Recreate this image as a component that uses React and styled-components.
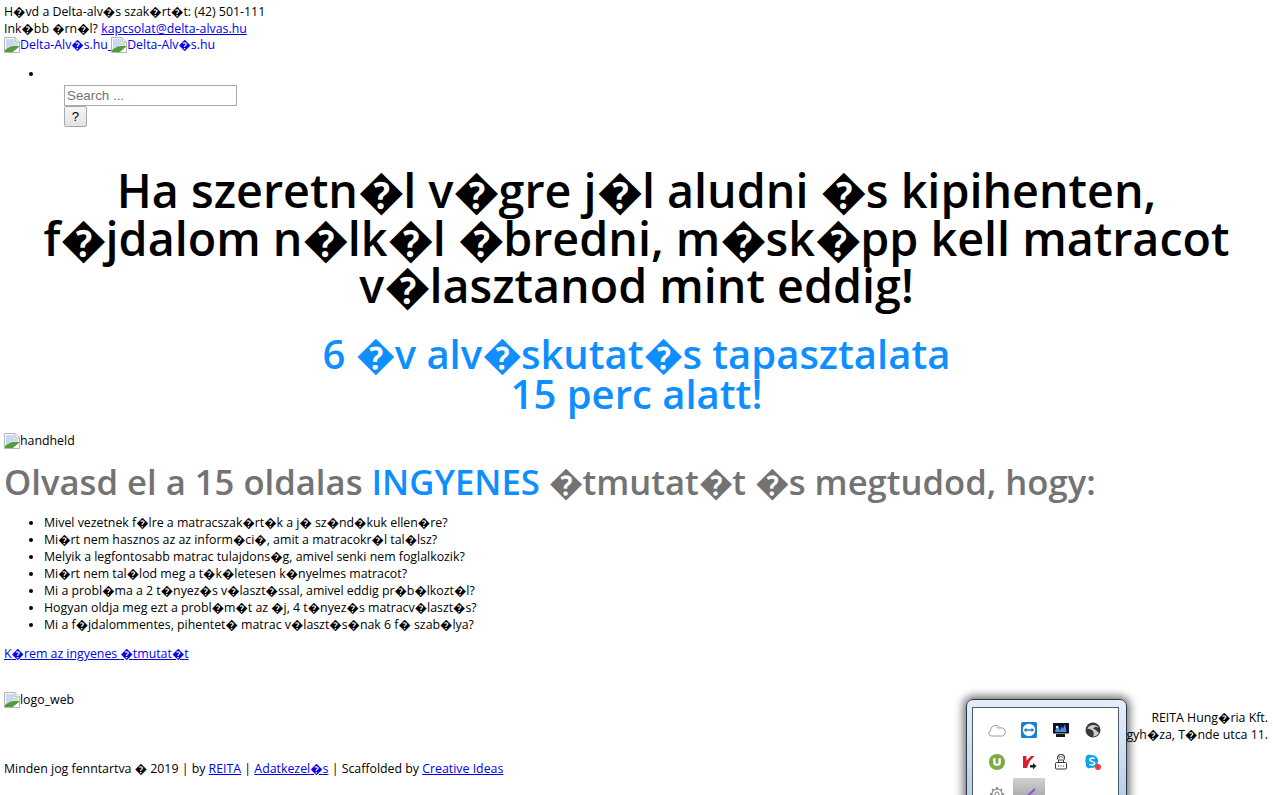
import React from "react";
import styled, { createGlobalStyle } from "styled-components";

const GlobalStyle = createGlobalStyle`
  html, body {
    margin: 0;
    padding: 0;
    background: #fff;
  }
  body {
    font-family: "Open Sans", sans-serif;
    font-size: 12.35px;
    line-height: 17px;
    color: #000;
    overflow: hidden;
  }
`;

const Page = styled.div`
  position: relative;
  height: 795px;
  padding: 3px 4px 0;
  box-sizing: border-box;
  overflow: hidden;
`;

const Line = styled.div``;

const Link = styled.a`
  color: #0000ee;
  text-decoration: underline;
`;

const AltText = styled.span`
  display: inline-block;
  text-decoration: none;
`;

const BrokenWrap = styled.span`
  display: inline-flex;
  align-items: center;
  vertical-align: bottom;
  height: 16px;
`;

const LogoLine = styled.div`
  height: 16px;
  line-height: 16px;
`;

const NavList = styled.ul`
  margin: 12px 0 0;
  padding: 0 0 0 40px;
  list-style: disc;
`;

const NavSpacer = styled.div`
  height: 20px;
`;

const SearchForm = styled.form`
  margin: 0 0 0 20px;
  display: flex;
  flex-direction: column;
  align-items: flex-start;
`;

const SearchInput = styled.input`
  width: 173px;
  height: 21px;
  box-sizing: border-box;
  border: 1px solid #a9a9a9;
  padding: 1px 2px;
  font-family: "Liberation Sans", Arial, sans-serif;
  font-size: 13.33px;
  &::placeholder {
    color: #757575;
  }
`;

const SearchButton = styled.button`
  width: 23px;
  height: 21px;
  padding: 0;
  border: 1px solid #a9a9a9;
  border-radius: 2px;
  background: linear-gradient(#f5f5f5, #e3e3e3);
  font-family: "Liberation Sans", Arial, sans-serif;
  font-size: 13.33px;
  color: #000;
`;

const Hero = styled.h1`
  margin: 40px 0 0;
  text-align: center;
  font-size: 46.67px;
  line-height: 47.5px;
  font-weight: 600;
`;

const SubHero = styled.h2`
  margin: 24px 0 0;
  text-align: center;
  font-size: 40px;
  line-height: 40px;
  font-weight: 600;
  color: #0f8fff;
`;

const HandheldLine = styled.div`
  margin-top: 19px;
  height: 16px;
  line-height: 16px;
`;

const GuideTitle = styled.h2`
  margin: 11px 0 0;
  font-size: 34.67px;
  line-height: 44px;
  font-weight: 600;
  color: #737373;
`;

const Accent = styled.span`
  color: #0f8fff;
`;

// the replacement glyph runs a bit narrower in the big headings
const BadChar = styled.span`
  letter-spacing: -0.03em;
`;

const PointList = styled.ul`
  margin: 10px 0 0;
  padding: 0 0 0 40px;
  list-style: disc;
`;

const Point = styled.li`
  line-height: 17px;
`;

const GuideLink = styled.div`
  margin-top: 12px;
`;

const LogoWeb = styled.div`
  margin-top: 30px;
  height: 16px;
  line-height: 16px;
`;

const FooterRow = styled.div`
  margin-top: 1px;
  text-align: right;
  padding-right: 1px;
`;

const Copyright = styled.div`
  margin-top: 17px;
`;

const TrayPopup = styled.div`
  position: absolute;
  left: 966px;
  top: 699px;
  width: 161px;
  height: 110px;
  box-sizing: border-box;
  padding: 7px 7px 0 5px;
  background: linear-gradient(#e4eefa 0%, #d2e2f3 40%, #b4cbe2 100%);
  border: 1px solid #2a3542;
  border-radius: 7px;
  box-shadow: 0 0 9px 3px rgba(0, 0, 0, 0.55);
`;

const TrayInner = styled.div`
  height: 100%;
  box-sizing: border-box;
  background: #fff;
  border: 1px solid #4d5b69;
  display: grid;
  grid-template-columns: repeat(4, 32px);
  grid-auto-rows: 32px;
  padding: 6px 0 0 8px;
`;

const TrayCell = styled.div`
  display: flex;
  align-items: center;
  justify-content: center;
  ${p => p.$active && "background: linear-gradient(#d2d2d2, #8f8f8f);"}
`;

function BrokenImage() {
  return (
    <svg width="16" height="16" viewBox="0 0 16 16">
      <path d="M0.5 0.5H11L15.5 5V15.5H0.5Z" fill="#fff" stroke="#b4b4b4" />
      <path d="M11 0.5V5H15.5" fill="#efefef" stroke="#b4b4b4" />
      <path d="M2 2H10V6H14V8C10 7.5 6 8.5 2 12Z" fill="#c9d8f2" />
      <path d="M1 15V13C5 9 10 8 15 9V10L9 15Z" fill="#4f9e3a" />
      <path d="M9 15L15 10V15Z" fill="#fff" />
    </svg>
  );
}

function Heading({ text }) {
  const parts = text.split("\uFFFD");
  return parts.map((part, i) => (
    <React.Fragment key={i}>
      {part}
      {i < parts.length - 1 && <BadChar>{"\uFFFD"}</BadChar>}
    </React.Fragment>
  ));
}

function TrayIcon({ kind }) {
  switch (kind) {
    case "cloud":
      return (
        <svg width="18" height="14" viewBox="0 0 18 14">
          <path d="M3.5 13a2.8 2.8 0 0 1-.7-5.5A4.6 4.6 0 0 1 8 2.5 4 4 0 0 1 11.8 5 3.5 3.5 0 0 1 14.5 13Z" fill="#fff" stroke="#9a9a9a" />
          <path d="M8 4.5a4 4 0 0 1 3.8 2.2" fill="none" stroke="#bdbdbd" />
        </svg>
      );
    case "teamviewer":
      return (
        <svg width="16" height="16" viewBox="0 0 16 16">
          <rect width="16" height="16" rx="1.5" fill="#1b7fd6" />
          <circle cx="8" cy="8" r="6.2" fill="#fff" />
          <path d="M2.8 8l2.7-2.2v1.4h5V5.8L13.2 8l-2.7 2.2V8.8h-5v1.4Z" fill="#1b7fd6" />
        </svg>
      );
    case "monitor":
      return (
        <svg width="16" height="16" viewBox="0 0 16 16">
          <rect y="1" width="16" height="10.5" fill="#0b1428" />
          <path d="M2 10L4 3.5l2 1.5 1 4 2-5 1 3 2-5 1.5 8Z" fill="#4f8fe0" />
          <path d="M3 4h2v2H3Z" fill="#e8eefc" />
          <rect x="3" y="12" width="9" height="3" fill="#161616" />
        </svg>
      );
    case "globe":
      return (
        <svg width="16" height="16" viewBox="0 0 16 16">
          <circle cx="8" cy="8" r="7.5" fill="#3a3a3a" />
          <path d="M2.2 6.5C5 2 11 2 14 5.5 11 4.5 9 5 8 6.5c2 .5 4 2.5 5.8 4.5-1 2-3 3.5-5.8 3.5 1.5-2 1-5-1-6.5-1.5-1-3.5-1.2-4.8-1.5Z" fill="#cfcfcf" />
        </svg>
      );
    case "utorrent":
      return (
        <svg width="16" height="16" viewBox="0 0 16 16">
          <circle cx="8" cy="8" r="8" fill="#79ab3f" />
          <path d="M4.2 4.2h2.4v4.6c0 1.4 2.8 1.4 2.8 0V4.2h2.4v4.8c0 3.8-7.6 3.8-7.6 0Z" fill="#fff" />
        </svg>
      );
    case "kaspersky":
      return (
        <svg width="15" height="15" viewBox="0 0 15 15">
          <path d="M1 1h3.5v4.5L9 1h3.5L7.5 6.5 5 13H1Z" fill="#dc1f30" />
          <path d="M8 10h3V8l3.5 3L11 14.5V12.5H8Z" fill="#222" />
        </svg>
      );
    case "wifi":
      return (
        <svg width="14" height="16" viewBox="0 0 14 16">
          <path d="M3.5 5.5V4a3.5 3.5 0 0 1 7 0v1.5" fill="none" stroke="#444" strokeWidth="1.2" />
          <path d="M5 4.5a2 2 0 0 1 4 0" fill="none" stroke="#777" />
          <rect x="4.5" y="6" width="5" height="2.5" fill="#fff" stroke="#444" />
          <rect x="1.5" y="8.5" width="11" height="6.5" rx="1" fill="#fff" stroke="#333" />
          <path d="M4 12h1M6.5 12h1M9 12h1" stroke="#333" />
        </svg>
      );
    case "skype":
      return (
        <svg width="16" height="16" viewBox="0 0 16 16">
          <path d="M4 0.5a3.5 3.5 0 0 1 2 .6A6 6 0 0 1 13 8a6 6 0 0 1-7 5.8A3.5 3.5 0 0 1 1 9.6 6 6 0 0 1 .8 4.5 3.5 3.5 0 0 1 4 .5Z" fill="#10a3e6" />
          <path d="M9.5 4.6C7.6 3.6 4.8 4 4.8 5.8c0 2.3 5 1.3 5 3.7 0 1.8-3.3 2-5.2.9" fill="none" stroke="#fff" strokeWidth="1.5" />
          <circle cx="13" cy="13" r="3" fill="#ea3b3b" />
        </svg>
      );
    case "gear":
      return (
        <svg width="16" height="16" viewBox="0 0 16 16">
          <circle cx="8" cy="8" r="5" fill="#fff" stroke="#777" />
          <circle cx="8" cy="8" r="2" fill="#fff" stroke="#777" />
          <path d="M8 1v2M8 13v2M1 8h2M13 8h2M3 3l1.5 1.5M13 3l-1.5 1.5M3 13l1.5-1.5M13 13l-1.5-1.5" stroke="#777" strokeWidth="1.6" />
        </svg>
      );
    case "pen":
      return (
        <svg width="16" height="16" viewBox="0 0 16 16">
          <path d="M1 15L14 3" stroke="#8f4fd8" strokeWidth="2" />
          <path d="M5 15L15 7" stroke="#b58ae8" />
        </svg>
      );
    default:
      return null;
  }
}

const trayIcons = ["cloud", "teamviewer", "monitor", "globe", "utorrent", "kaspersky", "wifi", "skype", "gear", "pen"];

const points = [
  "Mivel vezetnek f\uFFFDlre a matracszak\uFFFDrt\uFFFDk a j\uFFFD sz\uFFFDnd\uFFFDkuk ellen\uFFFDre?",
  "Mi\uFFFDrt nem hasznos az az inform\uFFFDci\uFFFD, amit a matracokr\uFFFDl tal\uFFFDlsz?",
  "Melyik a legfontosabb matrac tulajdons\uFFFDg, amivel senki nem foglalkozik?",
  "Mi\uFFFDrt nem tal\uFFFDlod meg a t\uFFFDk\uFFFDletesen k\uFFFDnyelmes matracot?",
  "Mi a probl\uFFFDma a 2 t\uFFFDnyez\uFFFDs v\uFFFDlaszt\uFFFDssal, amivel eddig pr\uFFFDb\uFFFDlkozt\uFFFDl?",
  "Hogyan oldja meg ezt a probl\uFFFDm\uFFFDt az \uFFFDj, 4 t\uFFFDnyez\uFFFDs matracv\uFFFDlaszt\uFFFDs?",
  "Mi a f\uFFFDjdalommentes, pihentet\uFFFD matrac v\uFFFDlaszt\uFFFDs\uFFFDnak 6 f\uFFFD szab\uFFFDlya?"
];

export default function App() {
  return (
    <Page>
      <GlobalStyle />
      <Line>H{"\uFFFD"}vd a Delta-alv{"\uFFFD"}s szak{"\uFFFD"}rt{"\uFFFD"}t: (42) 501-111</Line>
      <Line>
        Ink{"\uFFFD"}bb {"\uFFFD"}rn{"\uFFFD"}l? <Link href="#">kapcsolat@delta-alvas.hu</Link>
      </Line>
      <LogoLine>
        <Link href="#">
          <BrokenWrap><BrokenImage /></BrokenWrap><AltText>Delta-Alv{"\uFFFD"}s.hu</AltText>{" "}
          <BrokenWrap><BrokenImage /></BrokenWrap><AltText>Delta-Alv{"\uFFFD"}s.hu</AltText>
        </Link>
      </LogoLine>
      <NavList>
        <li>
          <NavSpacer>{"\u00A0"}</NavSpacer>
          <SearchForm>
            <SearchInput placeholder="Search ..." />
            <SearchButton type="button">?</SearchButton>
          </SearchForm>
        </li>
      </NavList>
      <Hero>
        <Heading text={"Ha szeretn\uFFFDl v\uFFFDgre j\uFFFDl aludni \uFFFDs kipihenten, f\uFFFDjdalom n\uFFFDlk\uFFFDl \uFFFDbredni, m\uFFFDsk\uFFFDpp kell matracot v\uFFFDlasztanod mint eddig!"} />
      </Hero>
      <SubHero>
        <Heading text={"6 \uFFFDv alv\uFFFDskutat\uFFFDs tapasztalata"} />
        <br />
        15 perc alatt!
      </SubHero>
      <HandheldLine>
        <BrokenWrap><BrokenImage /></BrokenWrap>handheld
      </HandheldLine>
      <GuideTitle>
        Olvasd el a 15 oldalas <Accent>INGYENES</Accent> <Heading text={"\uFFFDtmutat\uFFFDt \uFFFDs megtudod, hogy:"} />
      </GuideTitle>
      <PointList>
        {points.map(p => (
          <Point key={p}>{p}</Point>
        ))}
      </PointList>
      <GuideLink>
        <Link href="#">K{"\uFFFD"}rem az ingyenes {"\uFFFD"}tmutat{"\uFFFD"}t</Link>
      </GuideLink>
      <LogoWeb>
        <BrokenWrap><BrokenImage /></BrokenWrap>logo_web
      </LogoWeb>
      <FooterRow>
        REITA Hung{"\uFFFD"}ria Kft.
        <br />
        4400 Ny{"\uFFFD"}regyh{"\uFFFD"}za, T{"\uFFFD"}nde utca 11.
      </FooterRow>
      <Copyright>
        Minden jog fenntartva {"\uFFFD"} 2019 | by <Link href="#">REITA</Link> | <Link href="#">Adatkezel{"\uFFFD"}s</Link> | Scaffolded by <Link href="#">Creative Ideas</Link>
      </Copyright>
      <TrayPopup>
        <TrayInner>
          {trayIcons.map(k => (
            <TrayCell key={k} $active={k === "pen"}>
              <TrayIcon kind={k} />
            </TrayCell>
          ))}
        </TrayInner>
      </TrayPopup>
    </Page>
  );
}
